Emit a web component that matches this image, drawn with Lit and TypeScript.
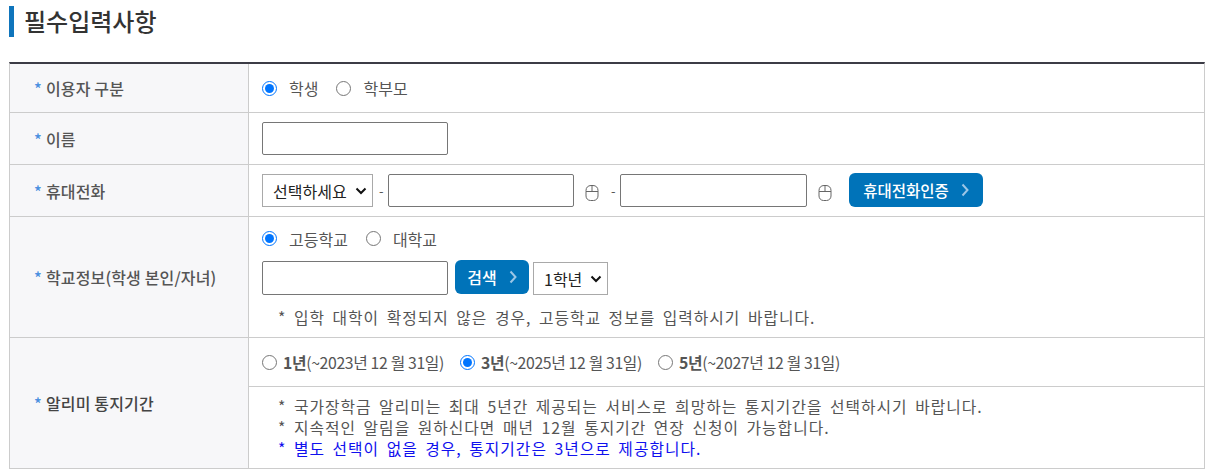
import { LitElement, html, css } from "lit";
import { customElement } from "lit/decorators.js";

const mouse = html`<svg class="ms" width="16" height="18" viewBox="0 0 16 18" fill="none" stroke="#666" stroke-width="1"><path d="M2 7.500V6.500C2 3.500 4 1.500 7 1.500h2c3 0 5 2 5 5v5.500c0 2.500-2 4.500-4.500 4.500h-3C4 16.500 2 14.500 2 12z"/><path d="M2 7.500h12M8 1.500v6"/></svg>`;
const chev = html`<svg width="8" height="14" viewBox="0 0 8 14" fill="none" stroke="#9cc6e6" stroke-width="2"><path d="M1.500 1.500l5 5.500-5 5.500"/></svg>`;

@customElement("app-root")
export class AppRoot extends LitElement {
  static styles = css`
    :host { display: block; width: 1213px; height: 471px; overflow: hidden; background: #fff; font-family: "Noto Sans CJK KR", "Noto Sans", sans-serif; font-size: 16px; color: #555; box-sizing: border-box; padding: 0 8px 0 9px; }
    h2 { margin: 0; height: 62px; box-sizing: border-box; padding-top: 6px; font-size: 24px; font-weight: 500; color: #333; display: flex; }
    h2 span { border-left: 5px solid #0f75bc; padding-left: 10px; height: 31px; line-height: 29px; }
    .table { border-top: 2px solid #3c3c46; border-left: 1px solid #ccc; border-right: 1px solid #ccc; display: grid; grid-template-columns: 239px 1fr; }
    .th { background: #f7f7f9; border-bottom: 1px solid #ccc; border-right: 1px solid #ccc; display: flex; align-items: center; padding-left: 24px; font-weight: 500; color: #555; font-size: 16px; letter-spacing: 0.150px; }
    .th b { color: #4a8fe0; font-weight: 500; margin-right: 4px; }
    .h48 { height: 48px; } .h51 { height: 51px; } .h120 { height: 120px; } .h130 { height: 130px; }
    .th.strong { color: #444; }
    .td { border-bottom: 1px solid #ccc; padding-left: 13px; display: flex; align-items: center; }
    .col { flex-direction: column; align-items: flex-start; padding: 0; }
    input[type=text] { box-sizing: border-box; width: 186px; height: 33px; border: 1px solid #767676; border-radius: 2px; padding: 0; margin: 0; background: #fff; flex: none; }
    input[type=radio] { width: 15px; height: 15px; margin: 0; accent-color: #0075ff; flex: none; }
    select { appearance: none; height: 33px; box-sizing: border-box; border: 1px solid #a9a9a9; border-radius: 0; background: #fff url("data:image/svg+xml,%3Csvg xmlns='http://www.w3.org/2000/svg' width='12' height='8' viewBox='0 0 12 8'%3E%3Cpath d='M1.500 1.500L6 6l4.500-4.500' fill='none' stroke='%23111' stroke-width='2'/%3E%3C/svg%3E") no-repeat right 5px center; font: inherit; font-size: 16px; color: #222; padding: 0 0 0 10px; margin: 0; flex: none; }
    .btn { background: #0073b9; color: #fff; border-radius: 6px; height: 34px; display: inline-flex; align-items: center; justify-content: center; font-weight: 500; font-size: 15.500px; gap: 12px; box-sizing: border-box; flex: none; }
    .r { display: flex; align-items: center; }
    .r label { display: inline-flex; align-items: center; gap: 12px; margin-right: 18px; }
    .pad { padding-left: 13px; }
    .rr { height: 43px; }
    .phone-sel { width: 111px; }
    .dash { margin: 0 5px 0 6px; width: 4px; font-size: 13px; }
    .ms { margin: 5px 11px 0 10px; flex: none; }
    .dash2 { margin-left: 0; margin-right: 5px; }
    .wide { width: 187px !important; }
    .phone-btn { width: 134px; margin: 0 0 2px 5px; }
    .search { display: flex; align-items: center; }
    .search input { height: 34px; }
    .s-btn { width: 74px; margin: 0 4px 2px 7px; font-size: 16px; }
    .yr { width: 75px; height: 33px; margin-top: 1px; }
    .note { letter-spacing: 1px; word-spacing: 3px; line-height: 21px; padding: 0 0 0 29px; font-size: 15.800px; color: #555; }
    .n1 { padding-top: 11px; }
    .n2 { padding-top: 9px; }
    .blue { color: #1010ee; }
    .period { height: 49px; width: 100%; box-sizing: border-box; border-bottom: 1px solid #ccc; letter-spacing: -0.350px; font-size: 15.800px; }
    .period label { gap: 6px; margin-right: 16px; }
    .period b { font-weight: 700; }
  `;
  render() {
    return html`
      <h2><span>필수입력사항</span></h2>
      <div class="table">
        <div class="th h48"><b>*</b>이용자 구분</div>
        <div class="td"><div class="r"><label><input type="radio" name="a" checked />학생</label><label><input type="radio" name="a" />학부모</label></div></div>
        <div class="th h51"><b>*</b>이름</div>
        <div class="td"><input type="text" /></div>
        <div class="th h51"><b>*</b>휴대전화</div>
        <div class="td">
          <select class="phone-sel"><option>선택하세요</option></select><span class="dash">-</span>
          <input type="text" />${mouse}<span class="dash dash2">-</span>
          <input type="text" class="wide" />${mouse}
          <span class="btn phone-btn">휴대전화인증 ${chev}</span>
        </div>
        <div class="th h120"><b>*</b>학교정보(학생 본인/자녀)</div>
        <div class="td col">
          <div class="r pad rr"><label><input type="radio" name="b" checked />고등학교</label><label><input type="radio" name="b" />대학교</label></div>
          <div class="search pad"><input type="text" /><span class="btn s-btn">검색 ${chev}</span><select class="yr"><option>1학년</option></select></div>
          <div class="note n1">* 입학 대학이 확정되지 않은 경우, 고등학교 정보를 입력하시기 바랍니다.</div>
        </div>
        <div class="th h130 strong"><b>*</b>알리미 통지기간</div>
        <div class="td col">
          <div class="r period pad">
            <label><input type="radio" name="c" /><span><b>1년</b>(~2023년 12 월 31일)</span></label>
            <label><input type="radio" name="c" checked /><span><b>3년</b>(~2025년 12 월 31일)</span></label>
            <label><input type="radio" name="c" /><span><b>5년</b>(~2027년 12 월 31일)</span></label>
          </div>
          <div class="note n2">* 국가장학금 알리미는 최대 5년간 제공되는 서비스로 희망하는 통지기간을 선택하시기 바랍니다.<br />* 지속적인 알림을 원하신다면 매년 12월 통지기간 연장 신청이 가능합니다.<br /><span class="blue">* 별도 선택이 없을 경우, 통지기간은 3년으로 제공합니다.</span></div>
        </div>
      </div>
    `;
  }
}
